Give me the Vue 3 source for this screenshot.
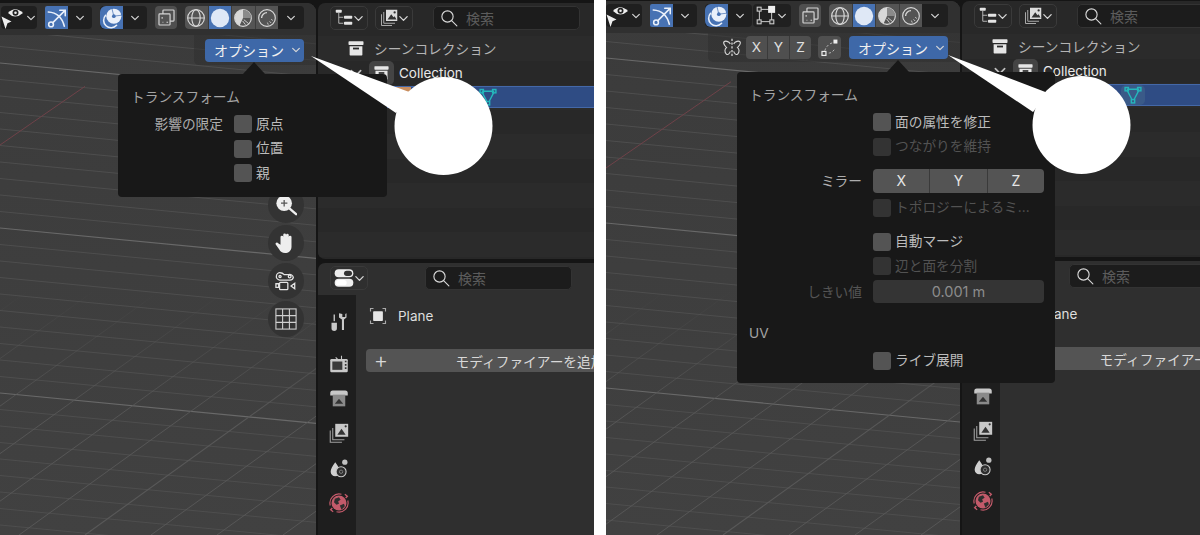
<template>
  <div class="page">
    <svg class="defs" width="0" height="0" aria-hidden="true">
      <defs>
        <symbol id="i-chev" viewBox="0 0 12 12"><path d="M2 4l4 4 4-4" fill="none" stroke="currentColor" stroke-width="1.4" stroke-linecap="round" stroke-linejoin="round"/></symbol>
        <symbol id="i-select" viewBox="0 0 24 24">
          <path d="M7 7Q14 -0.5 22 7Q14 14 7 7Z" fill="#eee"/><circle cx="14.5" cy="6.8" r="3" fill="#222"/><circle cx="14.5" cy="6.8" r="1.3" fill="#eee"/>
          <path d="M0.5 10.500l10 5-4 1.800L4.500 23Z" fill="#eee"/>
        </symbol>
        <symbol id="i-gizmo" viewBox="0 0 24 24">
          <g fill="none" stroke="#eaf0fa" stroke-width="1.7" stroke-linecap="round">
            <path d="M2.5 5.5C11 6 17.5 11 20 21"/><circle cx="5.5" cy="19" r="2.6"/><path d="M7.5 17L20.5 4M15 3.5h6v6"/>
          </g>
        </symbol>
        <symbol id="i-overlay" viewBox="0 0 24 24">
          <circle cx="14" cy="10" r="8.2" fill="#eaf0fa"/><circle cx="14" cy="10" r="2" fill="#4772b3"/>
          <path d="M14 10l-2-8M14 10l8-1" stroke="#4772b3" stroke-width=".8"/>
          <path d="M5 9A7.5 7.5 0 1 0 17 20" fill="none" stroke="#eaf0fa" stroke-width="1.7" stroke-linecap="round"/>
        </symbol>
        <symbol id="i-xform" viewBox="0 0 24 24">
          <path d="M5 5h11M5 5v14M19 8v11M5 19h14" fill="none" stroke="#cfcfcf" stroke-width="1.1"/>
          <rect x="15" y="1" width="8" height="8" fill="#eee"/>
          <g fill="#303030" stroke="#cfcfcf" stroke-width="1.2"><rect x="2.5" y="2.5" width="4.5" height="4.5"/><rect x="2.5" y="17" width="4.5" height="4.5"/><rect x="17" y="17" width="4.5" height="4.5"/></g>
        </symbol>
        <symbol id="i-xray" viewBox="0 0 24 24">
          <g fill="none" stroke="#d5d5d5" stroke-width="1.5"><rect x="7.5" y="2.5" width="14" height="14" rx="1"/><rect x="2.5" y="7.5" width="14" height="14" rx="1" fill="#545454"/></g>
          <path d="M6.5 11.5v2M12 18h2M7 18h1" stroke="#d5d5d5" stroke-width="1.4"/>
        </symbol>
        <symbol id="i-wire" viewBox="0 0 24 24">
          <g fill="none" stroke="#d8d8d8" stroke-width="1.4"><circle cx="12" cy="12" r="10"/><ellipse cx="12" cy="12" rx="5" ry="10"/><path d="M2 12h20"/></g>
        </symbol>
        <symbol id="i-solid" viewBox="0 0 24 24"><circle cx="12" cy="12" r="11" fill="#dfe8f6"/></symbol>
        <symbol id="i-material" viewBox="0 0 24 24">
          <circle cx="12" cy="12" r="10" fill="none" stroke="#d8d8d8" stroke-width="1.4"/>
          <path d="M12 2A10 10 0 0 0 8 21L12 12Z" fill="#d8d8d8"/><path d="M12 2V12h10A10 10 0 0 0 12 2Z" fill="#8a8a8a"/>
          <path d="M13 14l6 5M11.500 15.500l3.500 4.500" stroke="#d8d8d8" stroke-width="1.1"/>
        </symbol>
        <symbol id="i-rendered" viewBox="0 0 24 24">
          <circle cx="12" cy="12" r="10" fill="none" stroke="#d8d8d8" stroke-width="1.4"/>
          <path d="M5.500 12A6.500 6.500 0 0 1 12 5.500" fill="none" stroke="#d8d8d8" stroke-width="1.6"/>
          <path d="M19 15l-2-1.500M17 18l-2-2M13.500 20l-1-2.500" stroke="#d8d8d8" stroke-width="1"/>
        </symbol>
        <symbol id="i-search" viewBox="0 0 24 24"><g fill="none" stroke="#d8d8d8" stroke-width="1.5" stroke-linecap="round"><circle cx="10" cy="10" r="7.500"/><path d="M15.500 15.500l7 7"/></g></symbol>
        <symbol id="i-tree" viewBox="0 0 24 24">
          <g fill="#e4e4e4"><rect x="1" y="1" width="8" height="4" rx="1"/><rect x="12" y="9" width="11" height="4" rx="1"/><rect x="12" y="17" width="11" height="4" rx="1"/></g>
          <path d="M5 5v14h6M5 11h6" fill="none" stroke="#cfcfcf" stroke-width="1.1"/>
        </symbol>
        <symbol id="i-images" viewBox="0 0 24 24">
          <g fill="none" stroke="#b8b8b8" stroke-width="1.2"><path d="M2 7v15h14"/><path d="M5 4v15h15"/></g>
          <rect x="8" y="1" width="15" height="15" fill="#dcdcdc"/><path d="M10 14l5-7 3 4 1.500-1.500L22 14Z" fill="#333"/><circle cx="19.500" cy="4.500" r="1.500" fill="#333"/>
        </symbol>
        <symbol id="i-box" viewBox="0 0 24 24">
          <rect x="2" y="3" width="20" height="5" rx="1" fill="#e6e6e6"/><path d="M3.500 9.500h17V21a1 1 0 0 1-1 1h-15a1 1 0 0 1-1-1Z" fill="#e6e6e6"/><rect x="8" y="11.500" width="8" height="2.400" fill="#2a2a2a"/>
        </symbol>
        <symbol id="i-mesh" viewBox="0 0 24 24">
          <g fill="none" stroke="#25b6bb" stroke-width="1.7"><path d="M4.500 5h15M5 6.500l6 11.500M19 6.500l-6 11.500"/><rect x="2.500" y="3" width="4" height="4"/><rect x="17.500" y="3" width="4" height="4"/><rect x="10" y="17.500" width="4" height="4"/></g>
        </symbol>
        <symbol id="i-toggles" viewBox="0 0 30 30">
          <rect x="1" y="2" width="28" height="12" rx="6" fill="#eee"/><rect x="15" y="4" width="12" height="8" rx="4" fill="#333"/>
          <rect x="1" y="16" width="28" height="12" rx="6" fill="#eee"/><rect x="3" y="18" width="16" height="8" rx="4" fill="#fff"/>
        </symbol>
        <symbol id="i-tools" viewBox="0 0 24 24">
          <path d="M14 2.500v5l3.500 2.500v12.500h2.500V10l3-2.500v-5l-1.500 1v3.500h-3.500V3.500Z" fill="#c8c8c8" transform="translate(-2 -1)"/>
          <rect x="5.500" y="3" width="1.600" height="8" fill="#c8c8c8"/><path d="M3 13h6.500v6.500a3 3 0 0 1-6.500 0Z" fill="#c8c8c8"/>
        </symbol>
        <symbol id="i-render" viewBox="0 0 24 24">
          <path d="M8 4l3 3M15 2v4" stroke="#c8c8c8" stroke-width="1.300"/><rect x="1.500" y="6" width="21" height="16" rx="1.500" fill="#c8c8c8"/>
          <rect x="4" y="9" width="12" height="10" fill="#3a3a3a"/><path d="M19 9h2M19 13h2M19 17h2" stroke="#333" stroke-width="2"/>
        </symbol>
        <symbol id="i-output" viewBox="0 0 24 24">
          <path d="M1.500 6a3 3 0 0 1 3-3h15a3 3 0 0 1 3 3v3h-21Z" fill="#c8c8c8"/>
          <rect x="4.500" y="8" width="15" height="14" fill="#8a8a8a"/><path d="M7 19l5-6 5 6Z" fill="#333"/>
        </symbol>
        <symbol id="i-layers" viewBox="0 0 24 24">
          <g fill="none" stroke="#a0a0a0" stroke-width="1.300"><path d="M1.500 9v14h14"/><path d="M4.500 6v14h14"/></g>
          <rect x="7.500" y="1" width="15.500" height="15.500" fill="#c8c8c8"/><path d="M10 14l5-7 5 7Z" fill="#333"/><circle cx="20" cy="4" r="1.300" fill="#333"/>
        </symbol>
        <symbol id="i-particles" viewBox="0 0 24 24">
          <path d="M7.500 5C11 10 13 13 13 16.500a5.500 5.500 0 0 1-11 0C2 13 4 10 7.500 5Z" fill="#d0d0d0"/>
          <circle cx="19" cy="5" r="3.200" fill="#c0c0c0"/><circle cx="14.500" cy="16.500" r="6" fill="#2e2e2e" stroke="#c8c8c8" stroke-width="1.300"/><circle cx="14.500" cy="16.500" r="2" fill="none" stroke="#888" stroke-width="1"/>
        </symbol>
        <symbol id="i-world" viewBox="0 0 24 24">
          <circle cx="12" cy="12" r="9" fill="#c35a6a"/>
          <path d="M7 7l5-2 2 3-3 2 1 3-3 1-3-3ZM13 15l5-2 1 3-4 4Z" fill="#2e2e2e"/>
          <path d="M19 1.500L22 4 20 6M5 22.500L2 20l2-2" fill="none" stroke="#c35a6a" stroke-width="1.600"/>
          <path d="M22.500 9A11 11 0 0 1 9 22.500M1.500 15A11 11 0 0 1 15 1.500" fill="none" stroke="#c35a6a" stroke-width="1.400"/>
        </symbol>
        <symbol id="i-plane" viewBox="0 0 24 24">
          <path d="M2 6V2h4M18 2h4v4M22 18v4h-4M6 22H2v-4" fill="none" stroke="#aaa" stroke-width="1.500"/>
          <rect x="5.500" y="5.500" width="13" height="13" rx="1" fill="#e6e6e6"/>
        </symbol>
        <symbol id="i-zoom" viewBox="0 0 24 24">
          <circle cx="10" cy="10" r="8.500" fill="#eee"/><path d="M10 6.500v7M6.500 10h7" stroke="#555" stroke-width="1.400"/><path d="M16 16l7 6" stroke="#eee" stroke-width="2.600" stroke-linecap="round"/>
        </symbol>
        <symbol id="i-hand" viewBox="0 0 24 24">
          <path d="M6 14V5.500a1.500 1.500 0 0 1 3 0V12V3a1.500 1.500 0 0 1 3 0V12V3.500a1.500 1.500 0 0 1 3 0V12.500V5.500a1.500 1.500 0 0 1 3 0V16c0 4.500-3.500 7-7 7-3.200 0-5-1.500-6.500-4.200L.8 13.500c-.8-1.300 1-2.800 2.200-1.600Z" fill="#eee"/>
        </symbol>
        <symbol id="i-camera" viewBox="0 0 24 24">
          <g fill="none" stroke="#e4e4e4" stroke-width="1.400">
            <path d="M5 11a4 4 0 0 1 1-8c2 0 3 1 4 2h5a4 4 0 0 1 5 3 4 4 0 0 1-4 3Z"/><circle cx="5.500" cy="7" r="1.200"/><circle cx="16" cy="7" r="1.500"/>
            <rect x="5" y="13.500" width="9" height="8" rx="1"/>
          </g>
          <path d="M1 15h3v4H1ZM17.500 17.500l4-3v6Z" fill="none" stroke="#e4e4e4" stroke-width="1.400"/>
        </symbol>
        <symbol id="i-grid" viewBox="0 0 24 24">
          <g fill="none" stroke="#cfcfcf" stroke-width="1.200"><rect x="1" y="1" width="22" height="22"/><path d="M8.300 1v22M15.700 1v22M1 8.300h22M1 15.700h22"/></g>
        </symbol>
        <symbol id="i-mirror" viewBox="0 0 24 24">
          <g fill="none" stroke="#d8d8d8" stroke-width="1.300"><path d="M10 7C8 4 4 3 2.500 4.500S4 10 5.500 11.500C3 13 3 17 5 19s4 0 5-3"/><path d="M14 7c2-3 6-4 7.500-2.500S20 10 18.500 11.500C21 13 21 17 19 19s-4 0-5-3"/></g>
          <path d="M12 1v22" stroke="#e8e8e8" stroke-width="1.400" stroke-dasharray="2.500 2"/>
        </symbol>
        <symbol id="i-snap" viewBox="0 0 24 24">
          <path d="M6 16C8 10 12 7 16 6" fill="none" stroke="#b8b8b8" stroke-width="1.200" stroke-dasharray="3 2.500"/>
          <path d="M11 19c3 0 6-2 8-6" fill="none" stroke="#b8b8b8" stroke-width="1.200" stroke-dasharray="3 2.500"/>
          <rect x="17" y="2" width="5" height="5" fill="#eee"/><rect x="2.500" y="17" width="5" height="5" fill="none" stroke="#eee" stroke-width="1.500"/>
        </symbol>
      </defs>
    </svg>

    <section v-for="p in panels" :key="p.id" class="shot" :class="p.id">
      <div class="viewport">
        <svg class="floor" :viewBox="`0 0 ${p.viewW} 535`" preserveAspectRatio="none">
          <defs>
            <linearGradient :id="`fade-${p.id}`" gradientUnits="userSpaceOnUse" x1="0" y1="290" x2="0" y2="420">
              <stop offset="0" stop-color="#585858" stop-opacity="0"/>
              <stop offset="1" stop-color="#585858" stop-opacity="1"/>
            </linearGradient>
          </defs>
          <line v-for="(l, i) in gridLines(p)" :key="i" :x1="l.x1" :y1="l.y1" :x2="l.x2" :y2="l.y2"
            :stroke="l.major ? '#696969' : '#4e4e4e'" :stroke-width="l.major ? 1.1 : 1"/>
          <line v-for="(l, i) in crossLines(p)" :key="`c${i}`" :x1="l.x1" :y1="l.y1" :x2="l.x2" :y2="l.y2"
            :stroke="`url(#fade-${p.id})`" :stroke-width="l.major ? 1.1 : .9"/>
          <line x1="0" :y1="p.redY" :x2="p.redEnd" :y2="p.redY - p.redEnd * 0.69" stroke="#6f4249" stroke-width="1"/>
        </svg>

        <header class="view-header">
          <div class="group"><svg class="ic select"><use href="#i-select"/></svg><svg class="chev"><use href="#i-chev"/></svg></div>
          <div class="group"><span class="blue-btn"><svg class="ic"><use href="#i-gizmo"/></svg></span><svg class="chev wide"><use href="#i-chev"/></svg></div>
          <div class="group" :class="{ tight: p.id === 'b' }"><span class="blue-btn round"><svg class="ic"><use href="#i-overlay"/></svg></span><svg class="chev wide"><use href="#i-chev"/></svg></div>
          <div v-if="p.id === 'b'" class="group xform"><svg class="ic"><use href="#i-xform"/></svg><svg class="chev"><use href="#i-chev"/></svg></div>
          <span class="grey-btn"><svg class="ic"><use href="#i-xray"/></svg></span>
          <div class="group shade">
            <span class="shade-btn"><svg class="ic"><use href="#i-wire"/></svg></span>
            <span class="shade-btn on"><svg class="ic"><use href="#i-solid"/></svg></span>
            <span class="shade-btn"><svg class="ic"><use href="#i-material"/></svg></span>
            <span class="shade-btn"><svg class="ic"><use href="#i-rendered"/></svg></span>
            <svg class="chev wide"><use href="#i-chev"/></svg>
          </div>
        </header>

        <div class="tool-bar">
          <template v-if="p.id === 'b'">
            <svg class="ic mirror"><use href="#i-mirror"/></svg>
            <div class="axis"><span v-for="a in axes" :key="a">{{ a }}</span></div>
            <span class="grey-btn snap"><svg class="ic"><use href="#i-snap"/></svg></span>
          </template>
          <div class="options"><span>オプション</span><svg class="chev"><use href="#i-chev"/></svg></div>
        </div>

        <div class="gizmos">
          <span v-for="g in gizmos" :key="g" class="gizmo"><svg class="ic"><use :href="`#i-${g}`"/></svg></span>
        </div>
      </div>

      <div class="side">
        <div class="outliner">
          <div class="area-head">
            <span class="mini-btn"><svg class="ic"><use href="#i-tree"/></svg><svg class="chev"><use href="#i-chev"/></svg></span>
            <span class="mini-btn"><svg class="ic"><use href="#i-images"/></svg><svg class="chev"><use href="#i-chev"/></svg></span>
            <div class="search out-search"><svg class="ic"><use href="#i-search"/></svg><span>検索</span></div>
          </div>
          <div class="tree-row scene"><svg class="ic"><use href="#i-box"/></svg><span>シーンコレクション</span></div>
          <div class="tree-row coll">
            <svg class="chev big"><use href="#i-chev"/></svg>
            <span class="coll-box"><svg class="ic"><use href="#i-box"/></svg></span>
            <span>Collection</span>
          </div>
          <div class="tree-row plain">
            <div class="selected">
              <span class="orange"></span>
              <span class="mesh-box"><svg class="ic"><use href="#i-mesh"/></svg></span>
            </div>
          </div>
          <div v-for="n in 6" :key="n" class="tree-row plain"></div>
        </div>

        <div class="props">
          <div class="area-head">
            <span class="mini-btn"><svg class="ic"><use href="#i-toggles"/></svg><svg class="chev"><use href="#i-chev"/></svg></span>
            <div class="search prop-search"><svg class="ic"><use href="#i-search"/></svg><span>検索</span></div>
          </div>
          <div class="prop-body">
            <nav class="tabs">
              <span v-for="t in tabs" :key="t" class="tab"><svg class="ic"><use :href="`#i-${t}`"/></svg></span>
            </nav>
            <div class="prop-main">
              <div class="plane-row"><svg class="ic"><use href="#i-plane"/></svg><span>Plane</span></div>
              <div class="add-btn"><span class="plus">+</span><span>モディファイアーを追加</span></div>
            </div>
          </div>
        </div>
      </div>

      <div class="popup">
        <span class="notch"></span>
        <template v-for="(r, i) in p.rows" :key="i">
          <div v-if="r.head" class="pop-head" :class="r.cls">{{ r.head }}</div>
          <div v-else class="pop-row" :class="r.cls">
            <span class="pop-label" :class="{ dim: r.dim }">{{ r.label }}</span>
            <div v-if="r.check" class="pop-check" :class="{ dim: r.dim }"><i></i><span>{{ r.check }}</span></div>
            <div v-else-if="r.axis" class="pop-axis"><span v-for="a in axes" :key="a">{{ a }}</span></div>
            <div v-else class="pop-field">{{ r.field }}</div>
          </div>
        </template>
      </div>

      <svg class="callout" viewBox="0 0 594 535">
        <polygon :points="p.tail" fill="#fff"/>
        <circle :cx="p.cx" :cy="p.cy" r="49" fill="#fff"/>
      </svg>
    </section>
  </div>
</template>

<script setup>
const axes = ['X', 'Y', 'Z']
const gizmos = ['zoom', 'hand', 'camera', 'grid']
const tabs = ['tools', 'render', 'output', 'layers', 'particles', 'world']

const panels = [
  {
    id: 'a',
    viewW: 316,
    gridBase: 63,
    crossAt: 85,
    redY: 145,
    redEnd: 85,
    cx: 443.5,
    cy: 126,
    tail: '311,56 412,93 396,113',
    rows: [
      { head: 'トランスフォーム' },
      { label: '影響の限定', check: '原点' },
      { check: '位置' },
      { check: '親' },
    ],
  },
  {
    id: 'b',
    viewW: 354,
    gridBase: 58,
    crossAt: 117,
    redY: 168,
    redEnd: 125,
    cx: 475.5,
    cy: 125,
    tail: '342,55 442,93 427,112',
    rows: [
      { head: 'トランスフォーム' },
      { check: '面の属性を修正' },
      { check: 'つながりを維持', dim: true },
      { label: 'ミラー', axis: true, cls: 'mt-l' },
      { check: 'トポロジーによるミ...', dim: true, cls: 'mt-s' },
      { check: '自動マージ', cls: 'mt-l' },
      { check: '辺と面を分割', dim: true },
      { label: 'しきい値', field: '0.001 m', dim: true, cls: 'mt-xs' },
      { head: 'UV', cls: 'uv' },
      { check: 'ライブ展開', cls: 'mt-uv' },
    ],
  },
]

// floor lines running towards the right edge
function gridLines(p) {
  const lines = []
  for (let k = -4; k < 32; k++) {
    const y = p.gridBase + k * 16.5
    lines.push({ x1: 0, y1: y, x2: p.viewW, y2: y + p.viewW * 0.096, major: k % 10 === 0 })
  }
  return lines
}

// the other direction, only visible low in the view
function crossLines(p) {
  const lines = []
  for (let k = -8; k < 8; k++) {
    const x = p.crossAt + k * 66
    lines.push({ x1: x, y1: 535, x2: x + 360, y2: 535 - 360 * 0.72, major: k === 0 })
  }
  return lines
}
</script>

<style>
html, body { margin: 0; background: #fff; }
</style>

<style scoped>
.page {
  display: flex;
  gap: 12px;
  width: 1200px;
  height: 535px;
  overflow: hidden;
  background: #fff;
  font-family: Inter, "Noto Sans CJK JP", sans-serif;
  font-size: 13.7px;
  color: #c8c8c8;
}
.defs { position: absolute; }
.shot {
  position: relative;
  display: flex;
  gap: 2px;
  flex: 0 0 594px;
  height: 535px;
  overflow: hidden;
  background: #151515;
  box-sizing: border-box;
  padding-top: 3px;
}
.shot.b { padding-top: 1px; }

.viewport {
  position: relative;
  flex: 0 0 316px;
  display: flex;
  flex-direction: column;
  background: linear-gradient(#3b3b3b, #414141);
  border-top-right-radius: 9px;
  overflow: hidden;
}
.b .viewport { flex-basis: 354px; }
.floor {
  position: absolute;
  left: 0;
  top: -3px;
  width: 100%;
  height: 535px;
}
.b .floor { top: -1px; }

.view-header {
  position: relative;
  display: flex;
  justify-content: flex-end;
  align-items: center;
  gap: 8px;
  flex: 0 0 32px;
  padding: 0 12px 3px 0;
  box-sizing: border-box;
  background: #303030;
}
.ic { width: 18px; height: 18px; flex: none; display: block; }
.chev { width: 10px; height: 10px; flex: none; color: #d8d8d8; }
.group {
  display: flex;
  align-items: center;
  height: 23px;
  background: #1f1f1f;
  border-radius: 4px;
}
.group:first-child { width: 36px; }
.select { width: 24px; height: 24px; margin-right: 1px; }
.chev.wide { margin: 0 8px; }
.group .blue-btn + .chev.wide { margin: 0 7px; }
.tight { margin-right: -7px; }
.xform { padding-left: 2px; gap: 1px; width: 38px; box-sizing: border-box; background: #202020; }
.xform .ic { width: 21px; height: 21px; }
.blue-btn {
  display: flex;
  align-items: center;
  justify-content: center;
  width: 23px;
  height: 23px;
  background: #4772b3;
  border-radius: 2px 0 0 2px;
}
.blue-btn .ic { width: 22px; height: 22px; }
.blue-btn.round { border-radius: 6px 0 0 6px; }
.grey-btn {
  display: flex;
  align-items: center;
  justify-content: center;
  width: 22px;
  height: 23px;
  background: #4f4f4f;
  border-radius: 4px;
}
.grey-btn .ic { width: 19px; height: 19px; }
.shade { width: 119px; overflow: hidden; }
.shade-btn {
  display: flex;
  align-items: center;
  justify-content: center;
  width: 23px;
  height: 23px;
  background: #545454;
  border-right: 1px solid #3c3c3c;
}
.shade-btn:nth-child(4) { border-right: 0; }
.shade-btn .ic { width: 20px; height: 20px; }
.shade-btn.on { background: #4772b3; }

.tool-bar {
  position: relative;
  display: flex;
  align-items: center;
  align-self: flex-end;
  height: 30px;
  padding: 0 12px 0 11px;
  background: rgba(48, 48, 48, 0.55);
  border-bottom-left-radius: 5px;
}
.b .tool-bar { height: 29px; padding-left: 14px; }
.options {
  display: flex;
  align-items: center;
  justify-content: space-between;
  width: 99px;
  height: 23px;
  box-sizing: border-box;
  padding: 0 3px 0 9px;
  background: #3e68a8;
  border-radius: 4px;
  color: #f0f0f0;
  font-size: 14px;
}
.mirror { width: 20px; height: 20px; margin-right: 4px; }
.axis {
  display: flex;
  height: 23px;
  margin-right: 7px;
  border-radius: 4px;
  overflow: hidden;
  color: #e0e0e0;
}
.axis span {
  width: 21px;
  line-height: 23px;
  text-align: center;
  background: #4f4f4f;
  border-right: 1px solid #3a3a3a;
}
.axis span:last-child { border-right: 0; }
.snap { width: 23px; margin-right: 8px; }

.gizmos {
  position: relative;
  display: flex;
  flex-direction: column;
  gap: 2px;
  align-self: flex-end;
  margin: 122px 12px 0 0;
}
.gizmo {
  display: flex;
  align-items: center;
  justify-content: center;
  width: 36px;
  height: 36px;
  border-radius: 50%;
  background: #333;
}
.gizmo .ic { width: 22px; height: 22px; }

.side {
  flex: 1;
  min-width: 0;
  display: flex;
  flex-direction: column;
  gap: 4px;
}
.outliner {
  flex: 0 0 256px;
  overflow: hidden;
  background: #282828;
  border-radius: 7px 0 0 7px;
}
.area-head {
  display: flex;
  align-items: center;
  height: 30px;
  padding-left: 12px;
  margin-bottom: 3px;
}
.mini-btn {
  display: flex;
  align-items: center;
  justify-content: center;
  flex: 0 0 38px;
  height: 24px;
  box-sizing: border-box;
  margin-right: 7px;
  border: 1px solid #3a3a3a;
  border-radius: 5px;
}
.mini-btn .chev { width: 11px; height: 11px; }
.search {
  display: flex;
  align-items: center;
  flex: 0 0 147px;
  height: 24px;
  box-sizing: border-box;
  padding-left: 6px;
  background: #1c1c1c;
  border: 1px solid #333;
  border-radius: 5px;
  color: #5c5c5c;
  font-size: 14px;
}
.search .ic { margin-right: 8px; }
.out-search { margin-left: 13px; }
.prop-search { margin-left: 50px; }

.tree-row {
  display: flex;
  align-items: center;
  height: 24.500px;
}
.tree-row:nth-child(even) { background: #2b2b2b; }
.scene { padding-left: 29px; color: #b4b4b4; }
.scene .ic { margin-right: 9px; }
.coll { padding-left: 31px; color: #e8e8e8; font-size: 13.5px; }
.chev.big { width: 14px; height: 14px; margin-right: 6px; color: #c0c0c0; }
.coll-box {
  display: flex;
  align-items: center;
  justify-content: center;
  width: 25px;
  height: 24px;
  margin-right: 5px;
  background: #444;
  border-radius: 5px;
}
.coll-box .ic { width: 17px; height: 17px; }
.selected {
  display: flex;
  align-items: flex-start;
  flex: 1;
  height: 22px;
  box-sizing: border-box;
  background: #2f4c84;
  border-top: 1px solid #4468a8;
  border-bottom: 1px solid #4468a8;
}
.orange {
  width: 16px;
  height: 8px;
  margin-left: 77px;
  background: #c88d5e;
}
.mesh-box {
  display: flex;
  align-items: center;
  justify-content: center;
  width: 24px;
  height: 20px;
  margin-left: 65px;
}
.mesh-box .ic { width: 20px; height: 20px; }
.b .mesh-box { background: #3a5a88; border-radius: 5px; margin-left: 66px; }

.props {
  flex: 1;
  display: flex;
  flex-direction: column;
  overflow: hidden;
  background: #2f2f2f;
  border-radius: 7px 0 0 0;
}
.props .mini-btn .ic { width: 20px; height: 20px; }
.prop-body { flex: 1; display: flex; margin-top: -1px; }
.tabs {
  flex: 0 0 38px;
  display: flex;
  flex-direction: column;
  padding-top: 9.500px;
  background: #1e1e1e;
}
.tab {
  display: flex;
  justify-content: center;
  align-items: center;
  height: 34.800px;
  padding-left: 4px;
}
.tab .ic { width: 20px; height: 20px; }
.tab:first-child { margin-bottom: 7px; }
.prop-main {
  flex: 1;
  padding: 10px 0 0 10px;
}
.plane-row {
  display: flex;
  align-items: center;
  height: 22px;
  margin-bottom: 22px;
  padding-left: 3px;
  color: #dedede;
  font-size: 13.500px;
}
.plane-row .ic { margin-right: 11px; }
.add-btn {
  display: grid;
  grid-template-columns: 30px 1fr 30px;
  align-items: center;
  width: 328px;
  height: 23px;
  background: #545454;
  border-radius: 4px;
  text-align: center;
  color: #d8d8d8;
}
.plus { font-size: 22px; line-height: 23px; font-weight: 300; }

.popup {
  position: absolute;
  left: 118px;
  top: 74px;
  width: 269px;
  height: 123px;
  box-sizing: border-box;
  padding-top: 11px;
  background: #181818;
  border-radius: 4px;
  --label: 105px;
}
.b .popup {
  left: 131px;
  top: 72px;
  width: 318px;
  height: 311px;
  --label: 125px;
}
.notch {
  position: absolute;
  left: 125px;
  top: -12px;
  width: 0;
  height: 0;
  border: 11px solid transparent;
  border-top: 0;
  border-bottom: 12px solid #181818;
}
.b .notch { left: 150px; }
.pop-head {
  height: 24px;
  line-height: 24px;
  margin-bottom: 3px;
  padding-left: 13px;
  color: #a4a4a4;
}
.b .pop-head { padding-left: 12px; }
.pop-head.uv { margin: 17px 0 0; }
.pop-row {
  display: flex;
  align-items: center;
  height: 24.500px;
  padding-right: 11px;
}
.pop-label {
  flex: 0 0 var(--label);
  margin-right: 11px;
  padding-bottom: 2px;
  text-align: right;
  color: #adadad;
  white-space: nowrap;
}
.pop-label.dim { color: #555; }
.pop-check { display: flex; align-items: center; color: #bcbcbc; white-space: nowrap; }
.pop-check i {
  flex: none;
  width: 18px;
  height: 18px;
  margin-right: 4px;
  background: #545454;
  border-radius: 3px;
}
.pop-check span { padding-bottom: 3px; }
.pop-check.dim { color: #525252; }
.pop-check.dim i { background: #333; }
.mt-xs { margin-top: 1.250px; height: 24px; }
.mt-s { margin-top: 2.250px; }
.mt-l { margin-top: 9.500px; }
.mt-uv { margin-top: 4px; }
.pop-axis {
  flex: 1;
  display: flex;
  height: 24px;
  border-radius: 4px;
  overflow: hidden;
  color: #e6e6e6;
  font-size: 14px;
}
.pop-axis span {
  flex: 1;
  line-height: 24px;
  text-align: center;
  background: #545454;
  border-right: 1px solid #3a3a3a;
}
.pop-axis span:last-child { border-right: 0; }
.pop-field {
  flex: 1;
  height: 23px;
  line-height: 23px;
  text-align: center;
  background: #343434;
  border-radius: 4px;
  color: #8c8c8c;
  font-size: 14.500px;
}
.callout {
  position: absolute;
  left: 0;
  top: 0;
  width: 594px;
  height: 535px;
  pointer-events: none;
}
</style>
